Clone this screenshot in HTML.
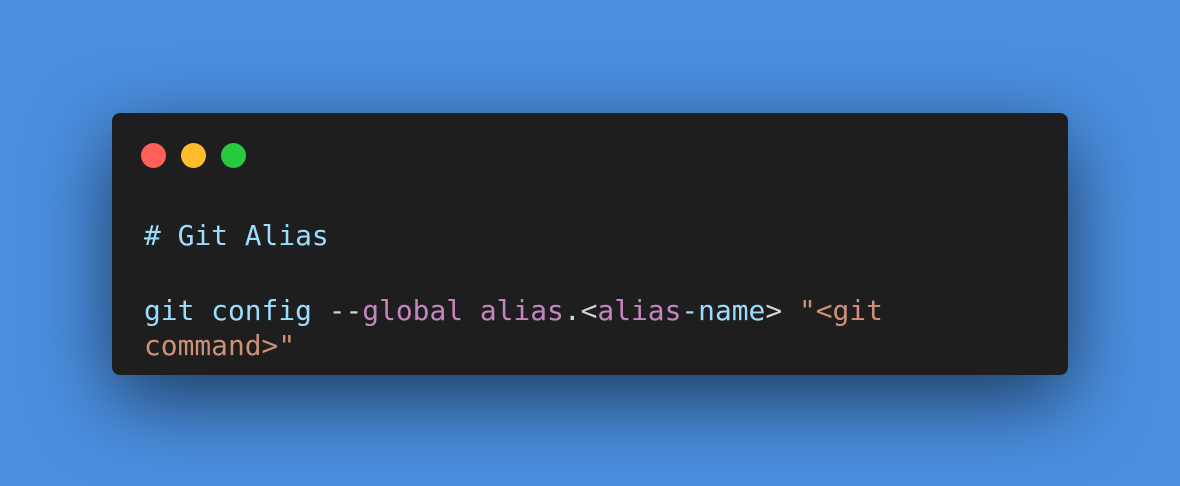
<!DOCTYPE html>
<html><head><style>
html,body{margin:0;padding:0;}
body{width:1180px;height:486px;background:#4a8fe0;position:relative;overflow:hidden;}
.card{position:absolute;left:112px;top:113px;width:956px;height:262px;background:#1e1e1e;border-radius:8px;box-shadow:0 24px 80px rgba(0,0,0,0.6);}
.dot{position:absolute;top:30px;width:25px;height:25px;border-radius:50%;}
.l{position:absolute;left:32px;margin:0;font-family:"DejaVu Sans Mono","Liberation Mono",monospace;font-size:27.9px;line-height:35px;color:#d4d4d4;white-space:pre;}
.b{color:#9cdcfe}.p{color:#c586c0}.s{color:#ce9178}
</style></head><body>
<div class="card">
<div class="dot" style="left:29px;background:#ff5f56"></div>
<div class="dot" style="left:69px;background:#ffbd2e"></div>
<div class="dot" style="left:109px;background:#27c93f"></div>
<div class="l b" style="top:105px"># Git Alias</div>
<div class="l" style="top:180px"><span class="b">git config</span> --<span class="p">global</span> <span class="p">alias</span>.&lt;<span class="p">alias</span><span class="b">-name</span>&gt; <span class="s">"&lt;git</span></div>
<div class="l s" style="top:215px">command&gt;"</div>
</div>
</body></html>
